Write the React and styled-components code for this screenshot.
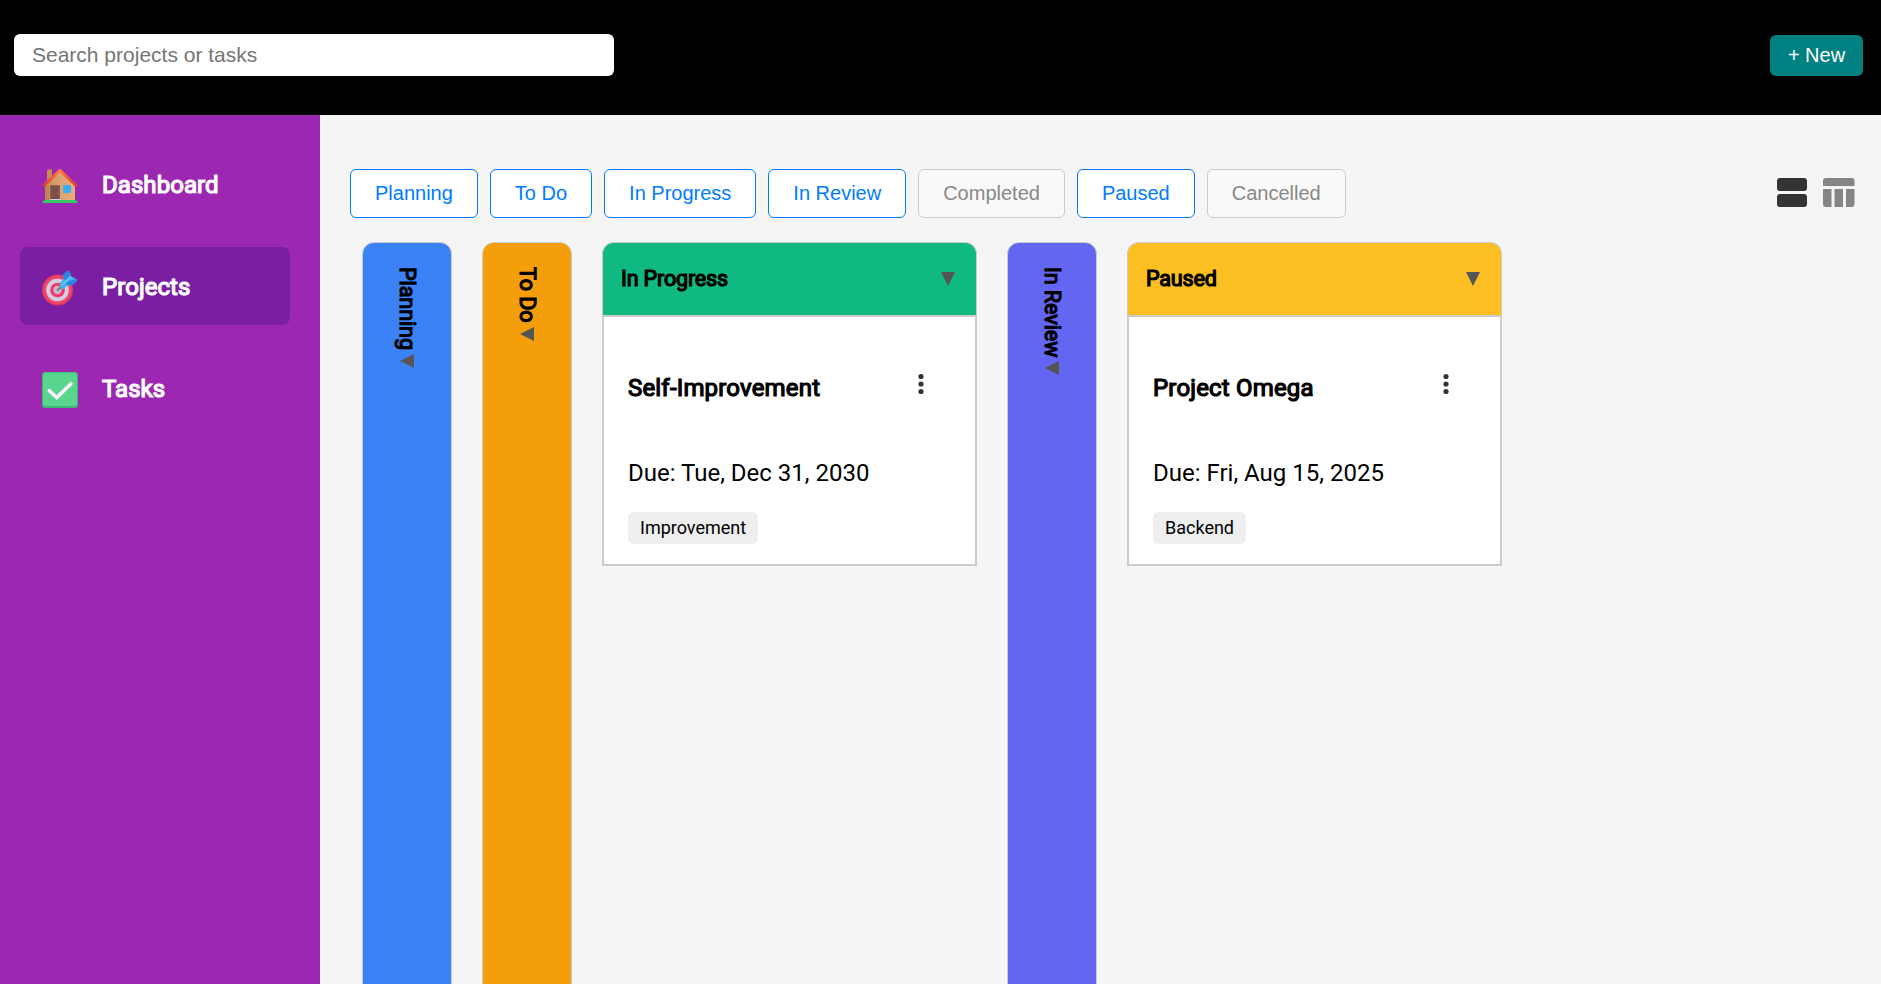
import React from "react";
import styled, { createGlobalStyle, css } from "styled-components";

const GlobalStyle = createGlobalStyle`
  * { box-sizing: border-box; }
  body { margin: 0; font-family: Roboto, "Liberation Sans", sans-serif; color: #000; background: #f5f5f5; overflow: hidden; }
  button, input { font-family: "Liberation Sans", Arial, sans-serif; font-size: 20px; margin: 0; }
`;

const heavy = css`
  font-weight: 400;
  -webkit-text-stroke: 1.2px currentColor;
`;

const Page = styled.div`
  display: flex;
  flex-direction: column;
  height: 984px;
  overflow: hidden;
`;

const Header = styled.header`
  display: flex;
  flex: none;
  justify-content: space-between;
  align-items: flex-start;
  height: 115px;
  padding: 34px 18px 0 14px;
  background: #000;
`;

const SearchInput = styled.input`
  width: 600px;
  height: 42px;
  padding: 0 18px;
  border: none;
  border-radius: 6px;
  background: #fff;
  font-size: 21px;
  &::placeholder { color: #757575; opacity: 1; }
`;

const NewButton = styled.button`
  width: 93px;
  height: 41px;
  margin-top: 1px;
  padding: 0;
  border: none;
  border-radius: 6px;
  background: #008080;
  color: #fff;
`;

const Body = styled.div`
  display: flex;
  flex: 1;
  min-height: 0;
`;

const Sidebar = styled.nav`
  display: flex;
  flex: none;
  flex-direction: column;
  gap: 24px;
  width: 320px;
  padding: 30px 30px 0 20px;
  background: #9c27b0;
`;

const NavItem = styled.a`
  display: flex;
  align-items: center;
  gap: 24px;
  height: 78px;
  padding-left: 22px;
  border-radius: 8px;
  background: ${(p) => (p.$active ? "#7b1fa2" : "transparent")};
  color: #fff;
`;

const NavIcon = styled.svg`
  width: 36px;
  height: 36px;
  margin-top: 4px;
`;

const NavLabel = styled.span`
  ${heavy}
  padding-top: 2px;
  font-size: 24px;
  line-height: 28px;
  letter-spacing: 0.06px;
`;

const Main = styled.main`
  flex: 1;
  min-width: 0;
  padding: 54px 26px 0 30px;
  background: #f5f5f5;
`;

const Toolbar = styled.div`
  display: flex;
  justify-content: space-between;
`;

const Filters = styled.div`
  display: flex;
  gap: 12px;
`;

const FilterButton = styled.button`
  height: 49px;
  padding: 0 24px;
  border: 1px solid ${(p) => (p.$off ? "#ccc" : "#007bff")};
  border-radius: 6px;
  background: ${(p) => (p.$off ? "#f9f9f9" : "#fff")};
  color: ${(p) => (p.$off ? "#888" : "#007bff")};
`;

const Views = styled.div`
  display: flex;
  gap: 16.5px;
  padding-top: 9px;
`;

const ViewIcon = styled.svg`
  width: ${(p) => p.$w}px;
  height: 30px;
  fill: ${(p) => p.$color};
`;

const Board = styled.div`
  display: flex;
  align-items: flex-start;
  gap: 30px;
  margin-top: 24px;
  padding-left: 12px;
`;

const CollapsedColumn = styled.section`
  display: flex;
  flex-direction: column;
  align-items: center;
  gap: 4px;
  width: 90px;
  height: 900px;
  padding-top: 24px;
  border: 1px solid #ccc;
  border-radius: 12px;
  background: ${(p) => p.$color};
`;

const VerticalTitle = styled.span`
  ${heavy}
  writing-mode: vertical-rl;
  margin-right: 1px;
  font-size: 21.6px;
  line-height: 26px;
  letter-spacing: -0.1px;
`;

const Column = styled.section`
  width: 375px;
`;

const ColumnHeader = styled.header`
  display: flex;
  align-items: center;
  justify-content: space-between;
  height: 73px;
  padding: 0 21px 0 18px;
  border: 1px solid #ccc;
  border-bottom: none;
  border-radius: 12px 12px 0 0;
  background: ${(p) => p.$color};
`;

const ColumnTitle = styled.h3`
  ${heavy}
  margin: 0;
  font-size: 21.6px;
  line-height: 26px;
  letter-spacing: -0.2px;
`;

const Triangle = styled.svg`
  flex: none;
  width: 14px;
  height: 14px;
  fill: #555;
`;

const Card = styled.article`
  height: 251px;
  padding: 56px 24px 0;
  border: 2px solid #ccc;
  background: #fff;
`;

const CardTop = styled.div`
  display: flex;
  justify-content: space-between;
  padding-right: 27px;
`;

const CardTitle = styled.h4`
  ${heavy}
  margin: 0;
  font-size: 24px;
  line-height: 30px;
  letter-spacing: 0.18px;
`;

const Dots = styled.svg`
  width: 6px;
  height: 22px;
  fill: #333;
`;

const Due = styled.p`
  margin: 55px 0 0;
  font-size: 24px;
  line-height: 30px;
`;

const Tag = styled.span`
  display: inline-block;
  height: 32px;
  margin-top: 24px;
  padding: 0 12px;
  border-radius: 6px;
  background: #eee;
  font-size: 18px;
  line-height: 32px;
`;

const House = () => (
  <NavIcon viewBox="0 0 36 36">
    <defs>
      <linearGradient id="wall"><stop offset="0" stopColor="#c78b52" /><stop offset=".5" stopColor="#dda273" /><stop offset="1" stopColor="#e8ae78" /></linearGradient>
      <linearGradient id="roof" x1="0" y1="0" x2="0" y2="1"><stop offset="0" stopColor="#ff7a3d" /><stop offset="1" stopColor="#dc3932" /></linearGradient>
    </defs>
    <path d="M5 2.6q0-1 1-1h4v13H5z" fill="#c58b51" />
    <path d="M3 17 17.8 3.5 33 17v16H3z" fill="url(#wall)" />
    <path d="M3 18h4v14H3z" fill="#bb8146" opacity=".6" />
    <path d="M1.2 18.2 17.8 2.3 34.800 18.2" fill="none" stroke="url(#roof)" strokeWidth="2.8" strokeLinejoin="round" />
    <rect x="8" y="17" width="10" height="15" rx="1" fill="#865b50" />
    <rect x="9.5" y="18.5" width="7" height="13" fill="#795047" />
    <circle cx="15.8" cy="24.8" r=".7" fill="#b5654e" />
    <rect x="21" y="17" width="8" height="8" rx="1" fill="#37aef5" />
    <path d="M8 31h11v1.5H8z" fill="#d9cbd1" />
    <path d="M0 35q1-3 3-3h30q2 0 3 3z" fill="#35c968" />
  </NavIcon>
);

const Target = () => (
  <NavIcon viewBox="0 0 36 36">
    <circle cx="15.5" cy="20" r="15.5" fill="#d83b62" />
    <circle cx="15.5" cy="20" r="14" fill="#ef476f" />
    <circle cx="15.5" cy="20" r="11.3" fill="#d5cde2" />
    <circle cx="15.5" cy="20" r="7.3" fill="#ec3b65" />
    <circle cx="15.5" cy="20" r="4.2" fill="#c7b9cd" />
    <path d="m15 20.5 7-6" stroke="#727985" strokeWidth="2" />
    <path d="M18 13 21.4 9.5 21 5 25.5.4 28 2.3l1 4L35.2 9.5 35 11l-5 4.3-4.4-.1L22 18.7q-3 1-4-2z" fill="#45afed" />
    <path d="M21.4 8.7 21 5 25.5.4 28 2.3l.5 3.7-4 5zM27 11l7.5-2 .6 1.3-5.2 5-4-.1-2.3-1.1z" fill="#2b83df" />
    <path d="m19.5 15.5 9.5-9" stroke="#58c5f6" strokeWidth="2.2" />
  </NavIcon>
);

const Check = () => (
  <NavIcon viewBox="0 0 36 36">
    <rect x="0" y="0" width="36" height="36" rx="3.5" fill="#40b676" />
    <rect x="1" y=".8" width="34" height="33.2" rx="3" fill="#58d68d" />
    <path d="m7.2 18.7 7.6 6.9L29 11.8" fill="none" stroke="#faf1fb" strokeWidth="3.6" strokeLinecap="round" />
  </NavIcon>
);

const Arrow = ({ side }) => (
  <Triangle viewBox="0 0 14 14">
    <path d={side ? "M14 0v14L0 7z" : "M0 0h14L7 14z"} />
  </Triangle>
);

const nav = [
  { label: "Dashboard", Icon: House },
  { label: "Projects", Icon: Target, active: true },
  { label: "Tasks", Icon: Check },
];

const filters = [
  ["Planning"], ["To Do"], ["In Progress"], ["In Review"],
  ["Completed", true], ["Paused"], ["Cancelled", true],
];

const columns = [
  { title: "Planning", color: "#3b82f6" },
  { title: "To Do", color: "#f59e0b" },
  { title: "In Progress", color: "#10b981", card: { title: "Self-Improvement", due: "Tue, Dec 31, 2030", tag: "Improvement" } },
  { title: "In Review", color: "#6366f1" },
  { title: "Paused", color: "#fbbf24", card: { title: "Project Omega", due: "Fri, Aug 15, 2025", tag: "Backend" } },
];

export default function App() {
  return (
    <Page>
      <GlobalStyle />
      <Header>
        <SearchInput placeholder="Search projects or tasks" />
        <NewButton>+ New</NewButton>
      </Header>
      <Body>
        <Sidebar>
          {nav.map(({ label, Icon, active }) => (
            <NavItem key={label} $active={active}>
              <Icon />
              <NavLabel>{label}</NavLabel>
            </NavItem>
          ))}
        </Sidebar>
        <Main>
          <Toolbar>
            <Filters>
              {filters.map(([label, off]) => (
                <FilterButton key={label} $off={off}>{label}</FilterButton>
              ))}
            </Filters>
            <Views>
              <ViewIcon $w={30} $color="#333" viewBox="0 0 30 30">
                <rect width="30" height="13" rx="3" />
                <rect y="16" width="30" height="13" rx="3" />
              </ViewIcon>
              <ViewIcon $w={32} $color="#858585" viewBox="0 0 32 30">
                <path d="M0 8V3q0-3 3-3h25.500q3 0 3 3v5zM0 11h8.500v18H3q-3 0-3-3zM11.500 11h8.500v18h-8.500zM23 11h8.500v15q0 3-3 3H23z" />
              </ViewIcon>
            </Views>
          </Toolbar>
          <Board>
            {columns.map(({ title, color, card }) =>
              card ? (
                <Column key={title}>
                  <ColumnHeader $color={color}>
                    <ColumnTitle>{title}</ColumnTitle>
                    <Arrow />
                  </ColumnHeader>
                  <Card>
                    <CardTop>
                      <CardTitle>{card.title}</CardTitle>
                      <Dots viewBox="0 0 6 22">
                        <circle cx="3" cy="3.500" r="2.600" />
                        <circle cx="3" cy="11" r="2.600" />
                        <circle cx="3" cy="18.500" r="2.600" />
                      </Dots>
                    </CardTop>
                    <Due>Due: {card.due}</Due>
                    <Tag>{card.tag}</Tag>
                  </Card>
                </Column>
              ) : (
                <CollapsedColumn key={title} $color={color}>
                  <VerticalTitle>{title}</VerticalTitle>
                  <Arrow side />
                </CollapsedColumn>
              )
            )}
          </Board>
        </Main>
      </Body>
    </Page>
  );
}
